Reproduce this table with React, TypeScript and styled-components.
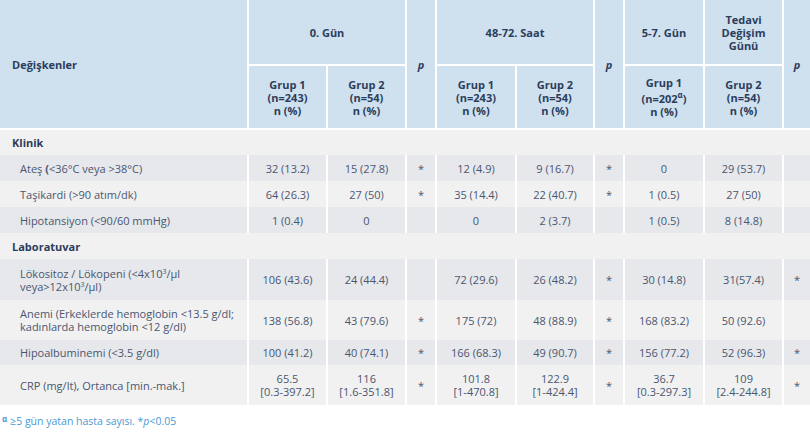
import React from "react";
import styled, { createGlobalStyle } from "styled-components";

const GlobalStyle = createGlobalStyle`
  html, body { margin: 0; padding: 0; background: #ffffff; }
  body { font-family: "Open Sans", "Noto Sans", sans-serif; }
`;

const Wrapper = styled.div`
  width: 810px;
`;

const Table = styled.table`
  width: 810px;
  border-collapse: separate;
  border-spacing: 0;
  table-layout: fixed;
`;

const HeadRow = styled.tr<{ $h: number }>`
  height: ${(p) => p.$h}px;
`;

const HeadCell = styled.th<{ $last?: boolean; $italic?: boolean; $left?: boolean }>`
  background: #cfe0ee;
  color: #2b3d5c;
  font-size: 11px;
  line-height: 13px;
  font-weight: 700;
  font-style: ${(p) => (p.$italic ? "italic" : "normal")};
  text-align: ${(p) => (p.$left ? "left" : "center")};
  vertical-align: middle;
  padding: 0 ${(p) => (p.$left ? "12px" : "2px")};
  border-right: ${(p) => (p.$last ? "none" : "2px solid #fff")};
  border-bottom: 2px solid #fff;
  box-sizing: border-box;
`;

const BodyRow = styled.tr<{ $h: number; $shade: boolean }>`
  height: ${(p) => p.$h}px;
  background: ${(p) => (p.$shade ? "#e6e8eb" : "#f1f1f1")};
`;

const CategoryCell = styled.td`
  color: #2b3d5c;
  font-size: 11px;
  line-height: 13px;
  font-weight: 700;
  padding: 0 12px;
  vertical-align: middle;
`;

const LabelCell = styled.td`
  color: #4a5670;
  font-size: 11px;
  line-height: 13px;
  padding: 0 4px 0 20px;
  vertical-align: middle;
  border-right: 2px solid #fff;
  white-space: nowrap;
`;

const ValueCell = styled.td<{ $last?: boolean }>`
  color: #4a5670;
  font-size: 11px;
  line-height: 13px;
  text-align: center;
  vertical-align: middle;
  padding: 0 1px;
  border-right: ${(p) => (p.$last ? "none" : "2px solid #fff")};
  white-space: nowrap;
`;

const Sup = styled.sup<{ $grow?: boolean }>`
  font-size: ${(p) => (p.$grow ? "8px" : "7px")};
  line-height: ${(p) => (p.$grow ? "normal" : "0")};
  vertical-align: ${(p) => (p.$grow ? "5px" : "4px")};
`;

const Footer = styled.div`
  margin-top: 7px;
  padding-left: 2px;
  color: #4a9ad4;
  font-size: 10.5px;
  line-height: 14px;
`;

const Alpha = styled.span`
  font-size: 8px;
  font-weight: 700;
  vertical-align: 3px;
  margin-right: 3px;
`;

const widths = [249, 79, 79, 30, 80, 78, 30, 80, 79, 26];

type Row = { label: React.ReactNode; h: number; v: string[] };

const klinik: Row[] = [
  {
    label: (
      <>
        Ateş <b>(</b>&lt;36°C veya &gt;38°C)
      </>
    ),
    h: 26,
    v: ["32 (13.2)", "15 (27.8)", "*", "12 (4.9)", "9 (16.7)", "*", "0", "29 (53.7)", ""],
  },
  {
    label: "Taşikardi (>90 atım/dk)",
    h: 26,
    v: ["64 (26.3)", "27 (50)", "*", "35 (14.4)", "22 (40.7)", "*", "1 (0.5)", "27 (50)", ""],
  },
  {
    label: "Hipotansiyon (<90/60 mmHg)",
    h: 26,
    v: ["1 (0.4)", "0", "", "0", "2 (3.7)", "", "1 (0.5)", "8 (14.8)", ""],
  },
];

const lab: Row[] = [
  {
    label: (
      <>
        Lökositoz / Lökopeni (&lt;4x10<Sup>3</Sup>/µl
        <br />
        veya&gt;12x10<Sup>3</Sup>/µl)
      </>
    ),
    h: 41,
    v: ["106 (43.6)", "24 (44.4)", "", "72 (29.6)", "26 (48.2)", "*", "30 (14.8)", "31(57.4)", "*"],
  },
  {
    label: (
      <>
        Anemi (Erkeklerde hemoglobin &lt;13.5 g/dl;
        <br />
        kadınlarda hemoglobin &lt;12 g/dl)
      </>
    ),
    h: 40,
    v: ["138 (56.8)", "43 (79.6)", "*", "175 (72)", "48 (88.9)", "*", "168 (83.2)", "50 (92.6)", ""],
  },
  {
    label: "Hipoalbuminemi (<3.5 g/dl)",
    h: 25,
    v: ["100 (41.2)", "40 (74.1)", "*", "166 (68.3)", "49 (90.7)", "*", "156 (77.2)", "52 (96.3)", "*"],
  },
  {
    label: "CRP (mg/lt), Ortanca [min.-mak.]",
    h: 40,
    v: [
      "65.5\n[0.3-397.2]",
      "116\n[1.6-351.8]",
      "*",
      "101.8\n[1-470.8]",
      "122.9\n[1-424.4]",
      "*",
      "36.7\n[0.3-297.3]",
      "109\n[2.4-244.8]",
      "*",
    ],
  },
];

const renderValue = (s: string) => {
  const parts = s.split("\n");
  return parts.map((p, i) => (
    <React.Fragment key={i}>
      {i > 0 && <br />}
      {p}
    </React.Fragment>
  ));
};

const DataRows = ({ rows, startShade }: { rows: Row[]; startShade: boolean }) => (
  <>
    {rows.map((r, i) => (
      <BodyRow key={i} $h={r.h} $shade={i % 2 === 0 ? startShade : !startShade}>
        <LabelCell>{r.label}</LabelCell>
        {r.v.map((val, j) => (
          <ValueCell key={j} $last={j === r.v.length - 1}>
            {renderValue(val)}
          </ValueCell>
        ))}
      </BodyRow>
    ))}
  </>
);

const GroupHead = ({ n, sup, last }: { n: string; sup?: boolean; last?: boolean }) => (
  <HeadCell $last={last}>
    {n.startsWith("1") ? "Grup 1" : "Grup 2"}
    <br />
    (n={n.slice(2)}
    {sup && <Sup $grow>α</Sup>})
    <br />n (%)
  </HeadCell>
);

export default function App() {
  return (
    <Wrapper>
      <GlobalStyle />
      <Table>
        <colgroup>
          {widths.map((w, i) => (
            <col key={i} style={{ width: w }} />
          ))}
        </colgroup>
        <thead>
          <HeadRow $h={66}>
            <HeadCell rowSpan={2} $left>
              Değişkenler
            </HeadCell>
            <HeadCell colSpan={2}>0. Gün</HeadCell>
            <HeadCell rowSpan={2} $italic>
              p
            </HeadCell>
            <HeadCell colSpan={2}>48-72. Saat</HeadCell>
            <HeadCell rowSpan={2} $italic>
              p
            </HeadCell>
            <HeadCell>5-7. Gün</HeadCell>
            <HeadCell>
              Tedavi
              <br />
              Değişim
              <br />
              Günü
            </HeadCell>
            <HeadCell rowSpan={2} $italic $last>
              p
            </HeadCell>
          </HeadRow>
          <HeadRow $h={64}>
            <GroupHead n="1:243" />
            <GroupHead n="2:54" />
            <GroupHead n="1:243" />
            <GroupHead n="2:54" />
            <GroupHead n="1:202" sup />
            <GroupHead n="2:54" />
          </HeadRow>
        </thead>
        <tbody>
          <BodyRow $h={25} $shade={false}>
            <CategoryCell colSpan={10}>Klinik</CategoryCell>
          </BodyRow>
          <DataRows rows={klinik} startShade={true} />
          <BodyRow $h={26} $shade={false}>
            <CategoryCell colSpan={10}>Laboratuvar</CategoryCell>
          </BodyRow>
          <DataRows rows={lab} startShade={true} />
        </tbody>
      </Table>
      <Footer>
        <Alpha>α</Alpha>≥5 gün yatan hasta sayısı. *<i>p</i>&lt;0.05
      </Footer>
    </Wrapper>
  );
}
